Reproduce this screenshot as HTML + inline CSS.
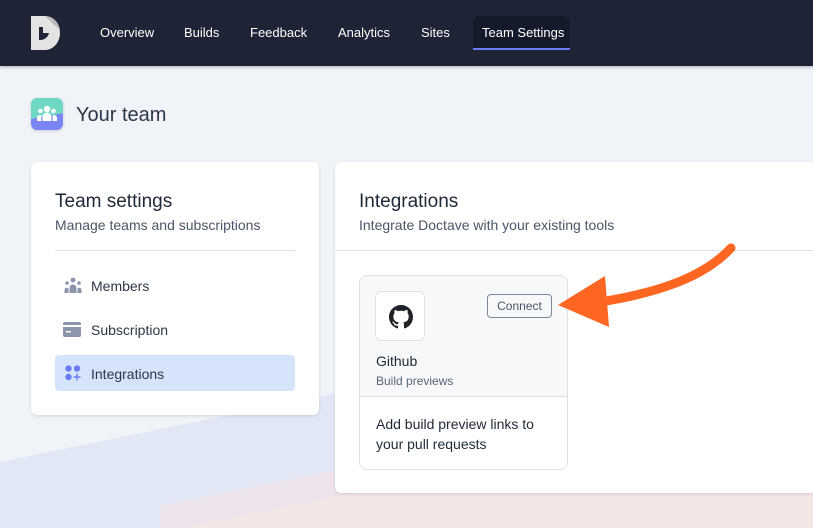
<!DOCTYPE html>
<html><head><style>
*{margin:0;padding:0;box-sizing:border-box}
body{width:813px;height:528px;overflow:hidden;background:#f0f3f8;font-family:"Liberation Sans",sans-serif;position:relative;color:#1f2937}
.nav{position:absolute;left:0;top:0;width:813px;height:66px;background:#1e2435;box-shadow:0 1px 3px rgba(0,0,0,.3)}
.nav a{position:absolute;top:25px;font-size:13px;color:#fff}
.tab{position:absolute;left:473px;top:16px;width:97px;height:34px;background:#141a2a;border-radius:6px 6px 0 0;border-bottom:2px solid #6b7cf6}
.card{position:absolute;background:#fff;border-radius:6px;box-shadow:0 1px 3px rgba(0,0,0,.12)}
.item{position:absolute;left:24px;width:240px;height:36px;border-radius:4px;font-size:14px;color:#2d3748;padding:11px 0 0 36px}
</style></head><body>
<svg style="position:absolute;left:0;top:0" width="813" height="528">
<polygon points="0,462 813,295 813,528 0,528" fill="#e2e7f6"/>
<polygon points="160,506 813,372 813,528 160,528" fill="#ede3ea"/>
<polygon points="180,528 813,402 813,528" fill="#f4e6e4"/>
</svg>
<div class="nav">
<svg style="position:absolute;left:31px;top:16px" width="30" height="34" viewBox="0 0 30 34"><path d="M0 0H14A15 17 0 0 1 14 34H0Z" fill="#e4e2e2"/><path d="M14 0A15 17 0 0 1 29 14L21 7Z" fill="#bdbbbb"/><path d="M8 11h4v6h6a9 9 0 0 1-9 7H8Z" fill="#1e2435"/></svg>
<a style="left:100px">Overview</a><a style="left:184px">Builds</a><a style="left:250px">Feedback</a><a style="left:338px">Analytics</a><a style="left:421px">Sites</a>
<div class="tab"></div><a style="left:482px">Team Settings</a>
</div>
<div style="position:absolute;left:31px;top:98px;width:32px;height:32px;border-radius:6px;background:linear-gradient(170deg,#6fd8c4 0 55%,#7b86f4 56%);box-shadow:0 1px 3px rgba(0,0,0,.15)">
<svg width="32" height="32" viewBox="0 0 32 32" fill="#fff"><circle cx="16" cy="11" r="3.2"/><circle cx="9.5" cy="13" r="2.3"/><circle cx="22.5" cy="13" r="2.3"/><path d="M11.5 23v-4a4.5 4.5 0 0 1 9 0v4z"/><path d="M6 23v-3a3 3 0 0 1 4.3-2.7V23z"/><path d="M26 23v-3a3 3 0 0 0-4.3-2.7V23z"/></svg></div>
<div style="position:absolute;left:76px;top:104px;font-size:20px;color:#2d3748">Your team</div>

<div class="card" style="left:31px;top:162px;width:288px;height:253px">
<div style="position:absolute;left:24px;top:29px;font-size:19px;color:#1f2937">Team settings</div>
<div style="position:absolute;left:24px;top:55px;font-size:14px;color:#4a5568">Manage teams and subscriptions</div>
<div style="position:absolute;left:24px;top:88px;width:240px;height:1px;background:#dde1e7"></div>
<div class="item" style="top:105px">Members
<svg style="position:absolute;left:9px;top:10px" width="18" height="16" viewBox="0 0 18 16" fill="#8b95ab"><circle cx="9" cy="3" r="2.4"/><circle cx="3" cy="6" r="1.8"/><circle cx="15" cy="6" r="1.8"/><path d="M5.5 16v-5a3.5 3.5 0 0 1 7 0v5z"/><path d="M0.5 16v-3a2.3 2.3 0 0 1 4-1.5V16z"/><path d="M17.5 16v-3a2.3 2.3 0 0 0-4-1.5V16z"/></svg></div>
<div class="item" style="top:149px">Subscription
<svg style="position:absolute;left:8px;top:11px" width="18" height="15" viewBox="0 0 18 15"><rect width="18" height="15" rx="2" fill="#8b95ab"/><rect y="3" width="18" height="2" fill="#fff"/><rect x="3" y="9" width="5" height="1.5" fill="#fff"/></svg></div>
<div class="item" style="top:193px;background:#d6e4fb">Integrations
<svg style="position:absolute;left:10px;top:10px" width="16" height="16" viewBox="0 0 16 16" fill="#6b7cf6"><circle cx="3.5" cy="3.5" r="3.2"/><circle cx="12" cy="3.5" r="3.2"/><circle cx="3.5" cy="12" r="3.2"/><path d="M11.3 8.5h1.4v2.8h2.8v1.4h-2.8v2.8h-1.4v-2.8H8.5v-1.4h2.8z"/></svg></div>
</div>

<div class="card" style="left:335px;top:162px;width:490px;height:331px">
<div style="position:absolute;left:24px;top:29px;font-size:19px;color:#1f2937">Integrations</div>
<div style="position:absolute;left:24px;top:55px;font-size:14px;color:#4a5568">Integrate Doctave with your existing tools</div>
<div style="position:absolute;left:0;top:88px;width:490px;height:1px;background:#dde1e7"></div>
<div style="position:absolute;left:24px;top:113px;width:209px;height:195px;border:1px solid #dde1e7;border-radius:8px;overflow:hidden">
<div style="height:121px;background:#f7f8fa;border-bottom:1px solid #dde1e7;position:relative">
<div style="position:absolute;left:15px;top:15px;width:50px;height:50px;background:#fff;border:1px solid #dde1e7;border-radius:6px">
<svg style="position:absolute;left:13px;top:13px" width="24" height="24" viewBox="0 0 16 16" fill="#1f2328"><path d="M8 0C3.58 0 0 3.58 0 8c0 3.540 2.29 6.530 5.47 7.59.4.07.55-.17.55-.38 0-.19-.01-.82-.01-1.49-2.01.37-2.53-.49-2.69-.94-.09-.23-.48-.94-.82-1.13-.28-.15-.68-.52-.01-.53.63-.01 1.08.58 1.23.82.72 1.21 1.87.87 2.33.66.07-.52.28-.87.51-1.07-1.78-.2-3.64-.89-3.64-3.950 0-.87.31-1.59.82-2.15-.08-.2-.36-1.02.08-2.12 0 0 .67-.21 2.2.82.64-.18 1.32-.27 2-.27.68 0 1.36.09 2 .27 1.53-1.04 2.2-.82 2.2-.82.44 1.1.16 1.92.08 2.12.51.56.82 1.27.82 2.15 0 3.07-1.87 3.75-3.65 3.95.29.25.54.73.54 1.48 0 1.07-.01 1.93-.01 2.2 0 .21.15.46.55.38A8.013 8.013 0 0016 8c0-4.42-3.58-8-8-8z"/></svg></div>
<div style="position:absolute;left:127px;top:18px;width:65px;height:24px;border:1px solid #7a8699;border-radius:4px;font-size:12px;color:#4a5568;text-align:center;line-height:22px">Connect</div>
<div style="position:absolute;left:16px;top:77px;font-size:14px;color:#1f2937">Github</div>
<div style="position:absolute;left:16px;top:98px;font-size:12px;color:#5a6578">Build previews</div>
</div>
<div style="padding:17px 16px 0;font-size:14px;line-height:20px;color:#1f2937">Add build preview links to your pull requests</div>
</div>
</div>
<svg style="position:absolute;left:0;top:0" width="813" height="528">
<path d="M731 248C705 276 662 292 600 302" stroke="#ff6622" stroke-width="9" fill="none" stroke-linecap="round"/>
<polygon points="558,305 605,276 609,327" fill="#ff6622"/>
</svg>
</body></html>
